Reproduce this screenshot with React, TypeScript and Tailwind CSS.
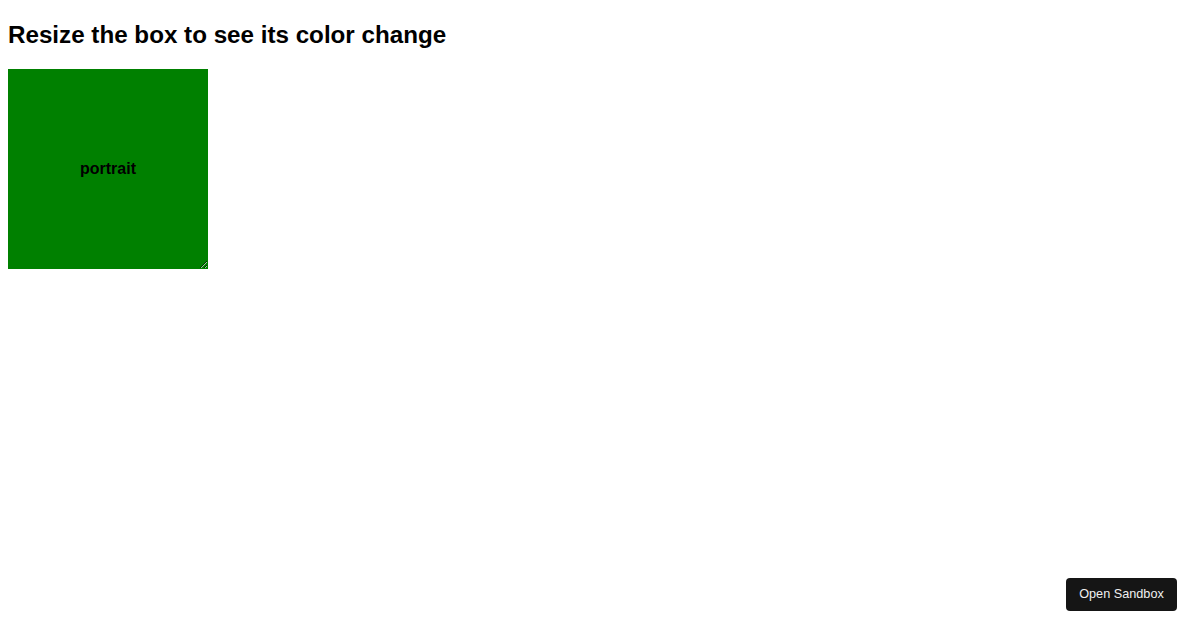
export default function App() {
  return (
    <main className="min-h-[630px] bg-white px-2 pt-[21px] text-black font-['Liberation_Sans',Arial,sans-serif]">
      <h2 className="text-[24.2px] font-bold leading-[28px] mb-[20px]">
        Resize the box to see its color change
      </h2>
      <div className="w-[200px] h-[200px] bg-[#008000] resize overflow-auto flex items-center justify-center">
        <span className="text-[16px] font-bold">portrait</span>
      </div>
      <button className="fixed right-[23px] bottom-[19px] w-[111px] h-[33px] rounded-[4px] bg-[#151515] text-[12.7px] text-[#f0f0f0] font-['Liberation_Sans',Arial,sans-serif]">
        Open Sandbox
      </button>
    </main>
  );
}
